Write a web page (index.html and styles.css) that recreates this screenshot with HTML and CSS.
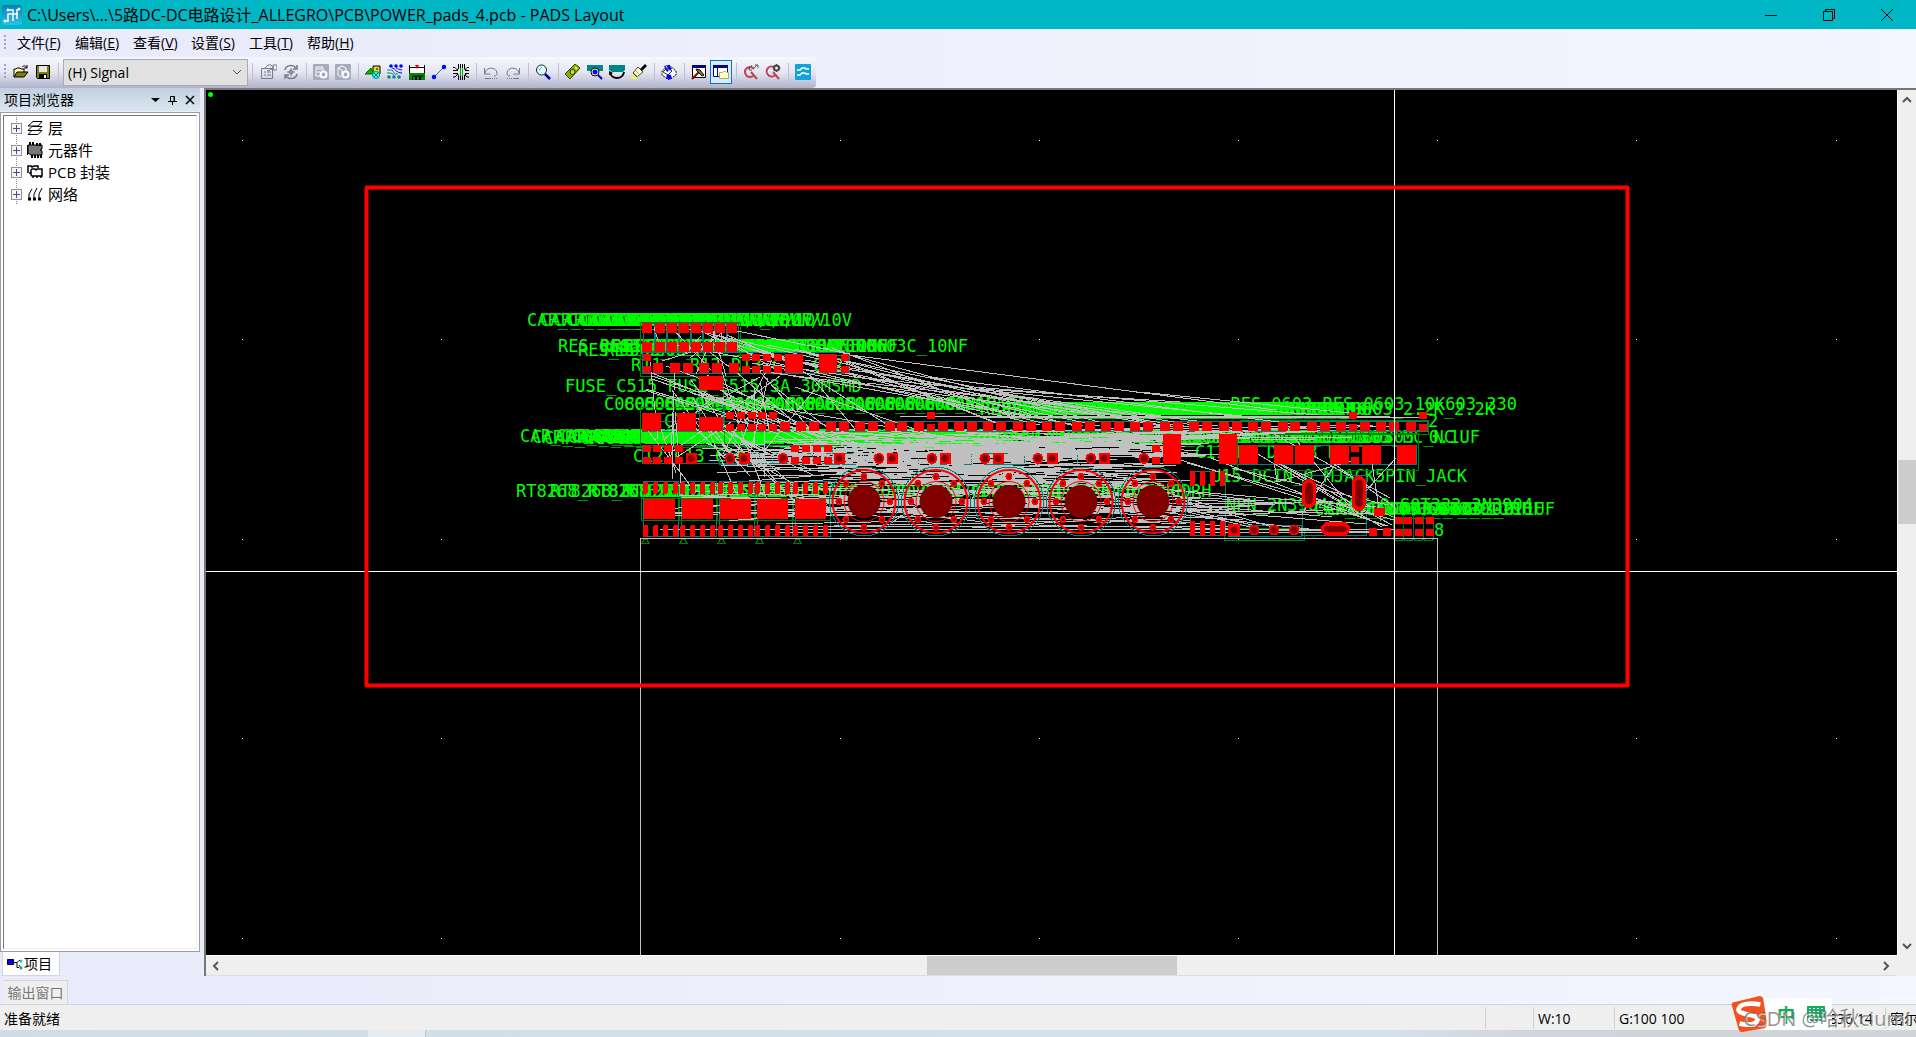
FILE: index.html
```html
<!DOCTYPE html>
<html lang="zh-CN">
<head>
<meta charset="utf-8">
<title>PADS Layout</title>
<link rel="stylesheet" href="styles.css">
</head>
<body>
<div class="app">
  <header class="titlebar">
    <svg class="logo" viewBox="0 0 20 20"><defs><linearGradient id="lg" x1="0" y1="0" x2="0" y2="1"><stop offset="0" stop-color="#0a7fb5"/><stop offset="1" stop-color="#2cc0ee"/></linearGradient></defs><rect width="20" height="20" rx="2" fill="url(#lg)"/><path d="M3 16h3V9h4M6 5h5v11M11 9h5M15 4v10M16 4h2" fill="none" stroke="#fff" stroke-width="1.500"/><circle cx="3" cy="16" r="1.500" fill="#fff"/><circle cx="6" cy="5" r="1.500" fill="#fff"/><circle cx="17" cy="4" r="1.500" fill="#fff"/></svg>
    <h1>C:\Users\...\5路DC-DC电路设计_ALLEGRO\PCB\POWER_pads_4.pcb - PADS Layout</h1>
    <div class="winbtns">
      <button aria-label="最小化"><svg viewBox="0 0 12 12"><path d="M0 6.500h12"/></svg></button>
      <button aria-label="还原"><svg viewBox="0 0 12 12"><path d="M.5 2.500h9v9h-9zM2.500 2.500v-2h9v9h-2"/></svg></button>
      <button aria-label="关闭"><svg viewBox="0 0 12 12"><path d="M0 0l12 12M12 0L0 12"/></svg></button>
    </div>
  </header>

  <nav class="menubar">
    <span class="grip"></span>
    <button>文件(<u>F</u>)</button><button>编辑(<u>E</u>)</button><button>查看(<u>V</u>)</button><button>设置(<u>S</u>)</button><button>工具(<u>T</u>)</button><button>帮助(<u>H</u>)</button>
  </nav>

  <div class="toolbar">
    <span class="grip"></span>
    <button aria-label="打开"><svg viewBox="0 0 16 16"><path d="M1 13V5h2l1-1h3l1 1h3v3" fill="#ff9" stroke="#000"/><path d="M1 13l3-5h11l-4 5z" fill="#808000" stroke="#000"/><path d="M9 3c2-2 4-1 5 1M14 1v3h-3" fill="none" stroke="#000"/></svg></button>
    <button aria-label="保存"><svg viewBox="0 0 16 16"><path d="M1.500 1.500h13v13h-12l-1-1z" fill="#808000" stroke="#000"/><path d="M4 2h8v6H4z" fill="#e6e6e6"/><path d="M4 10h8v4H4z" fill="#000"/><path d="M9 11h2v3H9z" fill="#fff"/></svg></button>
    <span class="sep"></span>
    <select aria-label="层"><option>(H) Signal</option></select>
    <span class="sep wide"></span>
    <button aria-label="特性"><svg viewBox="0 0 16 16" fill="none" stroke="#777b88"><path d="M.5 4.500h11v10H.5zM3 8h2m1 0h4M3 11h2m1 0h4M4 4l3-3h3l2 2v3l-2-1-2 2-2-1M12 1h4v5h-4z"/></svg></button>
    <button aria-label="循环"><svg viewBox="0 0 16 16" fill="none" stroke="#777b88"><path d="M2 6c1-5 8-6 11-2M14 1v4h-4M14 10c-1 5-8 6-11 2M2 15v-4h4" stroke-width="1.500"/><circle cx="8" cy="8" r="2"/><path d="M8 4v8M4 8h8"/></svg></button>
    <span class="sep"></span>
    <button aria-label="设计设置"><svg viewBox="0 0 16 16"><rect width="16" height="16" rx="1" fill="#a5aabd"/><path d="M3 3h7v9H3zM4 5h5M4 8h3" fill="none" stroke="#fff"/><circle cx="10.500" cy="10.500" r="3" fill="#a5aabd" stroke="#fff" stroke-width="2"/></svg></button>
    <button aria-label="库设置"><svg viewBox="0 0 16 16"><rect width="16" height="16" rx="1" fill="#a5aabd"/><path d="M3 4l4-2 4 2v3M3 4v7l3 2M3 4l4 2v5" fill="none" stroke="#fff"/><circle cx="10.500" cy="10.500" r="3" fill="#a5aabd" stroke="#fff" stroke-width="2"/></svg></button>
    <span class="sep"></span>
    <button aria-label="绘图"><svg viewBox="0 0 16 16" stroke="#000"><path d="M8 2h7v8H8z" fill="#dd2"/><path d="M0 10l6-6 3 6z" fill="#0b0" stroke="#060"/><path d="M11 5h2" /><circle cx="11" cy="11" r="3.500" fill="#3ff" stroke="#088"/><path d="M9 9l4 4m0-4l-4 4" stroke="#066"/></svg></button>
    <button aria-label="设计"><svg viewBox="0 0 16 16" fill="none"><g fill="#00f"><circle cx="4" cy="2" r="1.800"/><circle cx="9" cy="2" r="1.800"/><circle cx="14" cy="2" r="1.800"/></g><path d="M5 4c3 0 4 5 10 5M9 4c2 0 3 2 6 2" stroke="#00f"/><path d="M0 6h5l3 4h3M0 9h4l3 2" stroke="#088"/><g fill="#088"><circle cx="2" cy="13" r="1.800"/><circle cx="7" cy="13" r="1.800"/><circle cx="12" cy="13" r="1.800"/></g></svg></button>
    <button aria-label="尺寸"><svg viewBox="0 0 16 16"><path d="M0 2h16v7H0z" fill="#fff"/><path d="M.5 1v8M15.500 1v8M1 3.500h14" stroke="#000" fill="none"/><path d="M6 1l2 4 2-4z" fill="#e00"/><path d="M0 9h16v7H0z" fill="#080"/><path d="M3.500 16v-4h3v4m1 0v-4h3v4m1 0v-4h3" fill="none" stroke="#000"/></svg></button>
    <button aria-label="布线"><svg viewBox="0 0 16 16"><path d="M3 13L13 3" stroke="#088"/><circle cx="3" cy="13" r="2.200" fill="#00f"/><circle cx="13" cy="3" r="2.200" fill="#00f"/></svg></button>
    <button aria-label="ECO"><svg viewBox="0 0 16 16" fill="none" stroke="#000"><path d="M7.500 0v16M9.500 0v16" stroke="#0a0"/><path d="M5.500 0v5l-2 1M11.500 0v5l2 1M5.500 16v-5l-2-1M11.500 16v-5l2-1M0 3.500h2l2 2M0 6.500h5M0 9.500h5M0 13h2l2-2M16 3.500h-2l-2 2M16 6.500h-4M16 9.500h-4M16 13h-2l-2-2M7.500 0v4M9.500 0v4M7.500 12v4M9.500 12v4"/></svg></button>
    <span class="sep"></span>
    <button aria-label="撤销"><svg viewBox="0 0 16 16" fill="none" stroke="#777b88"><path d="M1.500 4v6h6M2 9c1-6 11-7 12 0 0 2-1 3-3 3"/><path d="M2 14.500h6m1 0h1m1 0h1m1 0h1"/></svg></button>
    <button aria-label="重做"><svg viewBox="0 0 16 16" fill="none" stroke="#777b88"><path d="M14.500 4v6h-6M14 9C13 3 3 2 2 9c0 2 1 3 3 3"/><path d="M2 14.500h1m1 0h1m1 0h1m1 0h6"/></svg></button>
    <span class="sep"></span>
    <button aria-label="缩放"><svg viewBox="0 0 16 16"><circle cx="6.500" cy="6" r="5" fill="#dff" stroke="#222"/><path d="M4 6l3-3" stroke="#0cc"/><path d="M10 10l5 5" stroke="#009" stroke-width="2.500"/></svg></button>
    <span class="sep"></span>
    <button aria-label="板"><svg viewBox="0 0 16 16"><path d="M0 10L10 0l5 4L5 15z" fill="#8a1" stroke="#440"/><circle cx="7.500" cy="8" r="2.500" fill="#dd3" stroke="#040"/><path d="M10 3l2 2" stroke="#ff0" stroke-width="2"/></svg></button>
    <button aria-label="查看网络"><svg viewBox="0 0 16 16"><path d="M0 1h16v6H0z" fill="#088"/><circle cx="8" cy="8" r="4" fill="#fff" stroke="#000"/><circle cx="8" cy="8" r="2.500" fill="#00f"/><path d="M11 11l4 4" stroke="#009" stroke-width="2"/></svg></button>
    <button aria-label="重绘"><svg viewBox="0 0 16 16"><path d="M0 1h16v5l-2 2H3L0 6z" fill="#088"/><path d="M1 8c1 8 13 8 14 0" fill="none" stroke="#000" stroke-width="2"/><path d="M0 11V7l4 2z"/></svg></button>
    <button aria-label="格式刷"><svg viewBox="0 0 16 16"><path d="M2 9l5-6 5 5-6 5z" fill="#ffc" stroke="#444"/><path d="M9 5l2 2 5-5-2-2z" fill="#000"/><path d="M5 7l4 4M3 9l4 4" stroke="#aa4"/><path d="M0 14h3l2 1" stroke="#ff0" stroke-width="2" fill="none"/></svg></button>
    <span class="sep"></span>
    <button aria-label="填充"><svg viewBox="0 0 16 16"><path d="M8 1l7 6v4l-7 5-7-5V7z" fill="#fff" stroke="#000" stroke-dasharray="2 1"/><path d="M3 2l5-1 3 4-5 3zM6 10l4 1 1 4H5z" fill="#00f"/><path d="M5 2l4 6" stroke="#fff"/><path d="M2 8l4-4 5 3-4 4z" fill="none" stroke="#333"/></svg></button>
    <span class="sep"></span>
    <button aria-label="输出"><svg viewBox="0 0 16 16"><path d="M1.500 2.500h13v11h-13z" fill="#fff" stroke="#000"/><path d="M1 1h14v3H1z" fill="#008"/><path d="M1 15l7-7" stroke="#800" stroke-width="2"/><path d="M5 5l4 1 4 5-2 1-5-5z" fill="#880" stroke="#000"/></svg></button>
    <button class="active" aria-label="项目浏览器"><svg viewBox="0 0 16 16"><path d="M.5 1.500h14v11H.5z" fill="#fff" stroke="#008"/><path d="M0 1h15v3H0z" fill="#008"/><path d="M4.500 3v10" stroke="#008"/><path d="M6.500 14.500v-6h3l1-1h2l1 1h2v6z" fill="#ffc" stroke="#aa6"/></svg></button>
    <span class="sep"></span>
    <button aria-label="发送"><svg viewBox="0 0 16 16" fill="none"><path d="M11 5a5 5 0 1 0 0 6M8 8l6 7" stroke="#c2434e" stroke-width="2"/><path d="M6 5l3-4M10 5l4-4M12 1h3v3M6 3v3h3" stroke="#555"/></svg></button>
    <button aria-label="查询设置"><svg viewBox="0 0 16 16" fill="none"><path d="M9 3a5 5 0 1 0 2 7M8 8l6 7" stroke="#c2434e" stroke-width="2"/><circle cx="11.500" cy="4" r="2.500" stroke="#444" stroke-width="2"/><path d="M11.500 0v8M7.500 4h8" stroke="#444" stroke-dasharray="1 6"/></svg></button>
    <span class="sep"></span>
    <button aria-label="Router"><svg viewBox="0 0 16 16"><rect width="16" height="16" rx="1" fill="#12a3d8"/><path d="M2 6h3l2-2h3l1 1h3M2 11h3l2-2h3l1 1h3" fill="none" stroke="#fff" stroke-width="1.500"/></svg></button>
  </div>

  <main class="work">
    <aside class="panel">
      <div class="panelhead"><h2>项目浏览器</h2>
        <button aria-label="菜单"><svg viewBox="0 0 10 10"><path d="M0 3h9L4.500 7z"/></svg></button>
        <button aria-label="固定"><svg viewBox="0 0 10 10"><path d="M2.500 6V1.500h4V6M0 6.500h9M4.500 7v3M6 1v5" fill="none" stroke="#000"/></svg></button>
        <button aria-label="关闭面板"><svg viewBox="0 0 10 10"><path d="M1 1l8 8M9 1L1 9" stroke="#000" stroke-width="1.500"/></svg></button>
      </div>
      <div class="treebox">
        <ul class="tree">
          <li><button class="plus" aria-label="展开"></button><svg viewBox="0 0 16 16" fill="#fff" stroke="#000"><path d="M1 14.500l4-4h10l-4 4zM1 10.500l4-4h10l-4 4zM1 6l5-4.500h9L11 6z"/></svg>层</li>
          <li><button class="plus" aria-label="展开"></button><svg viewBox="0 0 16 16"><path d="M1 3h14v4l-2 1 2 1v4H4L1 11z" fill="#777" stroke="#000"/><path d="M3 0v3m3-3v3m4-2v3m3-3v3M5 13v3m3-3v3m3-3v3m3-3v3M0 3v10" stroke="#000" stroke-width="2"/></svg>元器件</li>
          <li><button class="plus" aria-label="展开"></button><svg viewBox="0 0 16 16" fill="#fff" stroke="#000" stroke-width="1.500"><path d="M1 9V2h3l1 1 2-1h4v2"/><path d="M5 5h3l1 1 1-1h5v7H5l-1-1V6z"/><path d="M6 12v2m4-2v2m4-2v2M2 9h2"/></svg>PCB 封装</li>
          <li><button class="plus" aria-label="展开"></button><svg viewBox="0 0 16 16" fill="none" stroke="#000"><path d="M2 13V8l3-5M7 13V8l3-6M12 13V8l3-6" /><path d="M1 13h3M6 13h3M11 13h3" stroke-width="3"/></svg>网络</li>
        </ul>
      </div>
      <button class="tab"><svg viewBox="0 0 16 12"><path d="M.5 1.500h6v5h-6z" fill="#00f" stroke="#000"/><path d="M7 4.500h3v5h2M10 4.500l2-2h2M14 10l-2-3" fill="none" stroke="#000"/><circle cx="14" cy="3" r="1.500" fill="#0cc"/><circle cx="14" cy="10" r="1.500" fill="#0a8"/></svg>项目</button>
    </aside>

    <section class="view">
      <svg id="board" class="board" viewBox="206 90 1691 865" preserveAspectRatio="xMinYMin slice"></svg>
      <div class="vscroll"><button aria-label="上"><svg viewBox="0 0 10 8"><path d="M1 6l4-4 4 4"/></svg></button><i></i><b></b><i></i><button aria-label="下"><svg viewBox="0 0 10 8"><path d="M1 2l4 4 4-4"/></svg></button></div>
      <div class="hscroll"><button aria-label="左"><svg viewBox="0 0 8 10"><path d="M6 1L2 5l4 4"/></svg></button><i></i><b></b><i></i><button aria-label="右"><svg viewBox="0 0 8 10"><path d="M2 1l4 4-4 4"/></svg></button></div>
    </section>
  </main>

  <div class="outrow"><button>输出窗口</button></div>
  <footer class="status">
    <span class="ready">准备就绪</span><span class="c1"></span><span class="c2">W:10</span><span class="c3">G:100 100</span><span class="c4">836.14</span><span class="c5">密尔</span>
  </footer>
  <div class="desk"><i></i></div>

  <div class="ime"><svg class="sogou" viewBox="0 0 40 40"><path d="M3 8L31 1q3 0 4 3l4 26q0 4-3 5L13 39q-3 0-4-3L2 11q-1-2 1-3z" fill="#f4511e"/><path d="M32 10C22 8 10 9 9 15s21 5 20 11-12 6-19 4" fill="none" stroke="#fff" stroke-width="5"/></svg><span>中</span><svg class="keys" viewBox="0 0 18 16"><path d="M1 1h16v10H1zM1 4h16M1 7h16M5 1v10M9 1v10M13 1v10M3 14h12" fill="none" stroke="#12b05a" stroke-width="2"/></svg></div>
  <div class="watermark">CSDN @哈秋ciumi</div>
</div>
<script src="board.js"></script>
</body>
</html>
```
FILE: styles.css
```css
* { box-sizing: border-box; }
body { margin: 0; font-family: "Open Sans", "Noto Sans CJK SC", sans-serif; font-size: 14px; color: #000; }
button { border: 0; padding: 0; margin: 0; background: none; font: inherit; color: inherit; }
h1, h2 { margin: 0; font-weight: 400; }
svg { display: block; flex: none; }
.app { position: relative; height: 100vh; display: flex; flex-direction: column; overflow: hidden; background: linear-gradient(90deg, #e9eafa, #f3f6ff); }

.titlebar { flex: none; height: 29px; display: flex; align-items: center; background: #00b7c5; }
.logo { width: 20px; height: 20px; margin: 0 5px 0 2px; }
.titlebar h1 { flex: 1; font-size: 16px; line-height: 28px; white-space: nowrap; }
.winbtns { display: flex; }
.winbtns button { width: 58px; height: 28px; display: grid; place-items: center; }
.winbtns svg { width: 12px; height: 12px; fill: none; stroke: #000; }

.menubar { flex: none; height: 28px; display: flex; align-items: center; gap: 14px; }
.menubar button { width: 44px; text-align: left; white-space: nowrap; line-height: 20px; }
.grip { flex: none; width: 2px; height: 16px; margin-left: 4px; background: repeating-linear-gradient(#a5a7b8 0 2px, transparent 2px 4px); }
.menubar .grip { margin-right: -3px; }

.toolbar { flex: none; align-self: flex-start; height: 31px; padding: 0 2px 2px 0; display: flex; align-items: center; background: linear-gradient(#f6f7fd, #e4e5f1 50%, #b2b2cb); border-radius: 0 4px 4px 0; }
.toolbar .grip { margin-right: 4px; }
.toolbar button { width: 22px; height: 24px; display: grid; place-items: center; }
.toolbar button svg { width: 16px; height: 16px; }
.toolbar .active { background: #dde9fa; border: 1px solid #0078d7; }
.sep { width: 8px; height: 18px; background: linear-gradient(#bfc0cf, #bfc0cf) 4px 0 / 1px 100% no-repeat; }
.sep.wide { width: 10px; }
.toolbar select { width: 185px; height: 27px; margin: 2px 0 0 1px; padding: 0 24px 0 4px; appearance: none; border: 1px solid #acacac; border-radius: 0; font: inherit; color: #000; background: #e1e1e1 url("data:image/svg+xml,%3Csvg xmlns='http://www.w3.org/2000/svg' width='10' height='6'%3E%3Cpath d='M1 0l4 4 4-4' fill='none' stroke='%23555'/%3E%3C/svg%3E") right 5px center no-repeat; }

.work { flex: 1; min-height: 0; display: flex; }
.panel { flex: none; width: 200px; margin-right: 4px; display: flex; flex-direction: column; }
.panelhead { height: 23px; flex: none; padding: 0 2px 0 4px; display: flex; align-items: center; background: linear-gradient(#c0cfdf, #dbe6f1); }
.panelhead h2 { flex: 1; font-size: 14px; line-height: 20px; }
.panelhead button { width: 17px; display: grid; place-items: center; }
.panelhead svg { width: 10px; height: 10px; }
.treebox { flex: 1; margin-top: 1px; border: 1px solid #9a9ca6; padding: 2px; background: #fff; }
.tree { height: 100%; margin: 0; padding: 1px 0 0 7px; list-style: none; border-top: 1px solid #777; border-left: 1px solid #777; border-right: 1px solid #eee; border-bottom: 1px solid #eee; font-size: 15px; }
.tree li { height: 22px; display: flex; align-items: center; gap: 5px; line-height: 22px; white-space: nowrap; background: repeating-linear-gradient(#888 0 1px, transparent 1px 2px) 5px 0 / 1px 100% no-repeat; }
.tree li svg { width: 16px; height: 16px; }
.plus { width: 11px; height: 11px; border: 1px solid #919191; background: linear-gradient(#3a4f96, #3a4f96) center / 7px 1px no-repeat, linear-gradient(#3a4f96, #3a4f96) center / 1px 7px no-repeat, #f6f6f6; }
.tab { flex: none; width: 58px; height: 24px; margin: 0 0 0 2px; padding-left: 4px; display: flex; align-items: center; gap: 1px; background: #fff; border: solid #d4d4dc; border-width: 0 1px 1px; line-height: 20px; }
.tab svg { width: 16px; height: 12px; }

.view { flex: 1; min-width: 0; display: grid; grid-template: minmax(0, 1fr) 21px / minmax(0, 1fr) 19px; border: solid #777; border-width: 2px 0 0 2px; background: #efefef; }
.board { width: 100%; height: 100%; background: #000; }
.vscroll { display: grid; grid-template-rows: 20px 350fr 64fr 412fr 19px; border-left: 1px solid #fff; }
.hscroll { display: grid; grid-template-columns: 19px 702fr 250fr 697fr 23px; border-top: 1px solid #fff; border-bottom: 1px solid #ddd; }
.view b { background: #cdcdcd; }
.view button { display: grid; place-items: center; }
.view button svg { width: 10px; height: 10px; fill: none; stroke: #555; stroke-width: 2px; }

.outrow { flex: none; height: 29px; padding: 4px 0 0 4px; border-bottom: 1px solid #d3d3df; }
.outrow button { width: 64px; height: 24px; background: #efefef; border: 1px solid #d4d4dc; border-width: 1px 1px 0 0; color: #777; line-height: 22px; }
.status { flex: none; height: 25px; display: flex; align-items: center; background: #efefef; white-space: nowrap; }
.status span { height: 22px; line-height: 23px; padding-left: 4px; border-left: 1px solid #d2d2d2; }
.status .ready { flex: 1; border: 0; }
.c1 { width: 48px; } .c2 { width: 81px; } .c3 { width: 211px; }
.status .c4 { width: 60px; border: 0; }
.status .c5 { width: 31px; overflow: hidden; }
.desk { flex: none; height: 7px; background: linear-gradient(90deg, #d0dde6, #d3e2ed 72%, #d2d4dd 80%, #d0d3d8); }
.desk i { display: block; width: 58px; height: 7px; margin-left: 368px; background: #e8edf3; border-right: 1px solid #b9c4cf; }

.ime { position: absolute; right: 84px; bottom: 7px; height: 32px; width: 102px; display: flex; align-items: center; gap: 12px; padding-right: 5px; background: linear-gradient(#fff, #fff) right / 70px 100% no-repeat; color: #12b05a; font-size: 18px; font-weight: 700; }
.ime .sogou { width: 38px; height: 38px; margin: 0 -3px 0 0; }
.ime .keys { width: 18px; height: 16px; }
.watermark { position: absolute; right: 6px; bottom: 6px; font-size: 20px; line-height: 24px; color: rgba(110, 110, 110, .75); text-shadow: 1px 1px 0 rgba(255, 255, 255, .7); white-space: nowrap; }

.silk { font: 17px "DejaVu Sans Mono", monospace; fill: #0f0; }
.pad { fill: #f00; shape-rendering: crispEdges; }
.hole { fill: #800000; }
.ring { fill: none; stroke: #f00; }
.teal { fill: none; stroke: #008080; shape-rendering: crispEdges; }
.court { fill: none; stroke: #008000; shape-rendering: crispEdges; }
.net { fill: none; stroke: #c0c0c0; shape-rendering: crispEdges; }
.white { fill: none; stroke: #fff; shape-rendering: crispEdges; }
.mark { fill: none; stroke: #f00; stroke-width: 4px; stroke-linejoin: round; }
```
FILE: board.js
```js
const out = [];
const rect = (cls, x, y, w, h, r = 0) => out.push(`<rect class="${cls}" x="${x}" y="${y}" width="${w}" height="${h}" rx="${r}"/>`);
const circle = (cls, x, y, r, sw = 1) => out.push(`<circle class="${cls}" cx="${x}" cy="${y}" r="${r}" stroke-width="${sw}"/>`);
const text = (x, y, s, anchor = "start") => out.push(`<text class="silk" x="${x}" y="${y}" text-anchor="${anchor}">${s}</text>`);
const pads = (xs, y, w, h, r) => xs.forEach(x => rect("pad", x, y, w, h, r));
const path = (cls, d) => out.push(`<path class="${cls}" d="${d}"/>`);

// repeatable pseudo-random numbers for the ratsnest
let seed = 7;
const rnd = (a, b) => {
  seed = (seed * 1103515245 + 12345) % 2147483648;
  return Math.round(a + (b - a) * seed / 2147483648);
};

// grid dots
for (let i = 0; i < 9; i++)
  for (let j = 0; j < 5; j++) rect("dot", Math.round(242 + i * 199.2), Math.round(140 + j * 199.4), 1, 1);

// ratsnest, drawn in layers between the labels
let d = "";
const fan = (n, x1, x2, y1, y2, X1, X2, Y1, Y2) => {
  for (let i = 0; i < n; i++) d += `M${rnd(x1, x2)} ${rnd(y1, y2)}L${rnd(X1, X2)} ${rnd(Y1, Y2)}`;
};
const flush = () => { path("net", d); d = ""; };
fan(50, 740, 980, 428, 466, 980, 1230, 430, 460);
fan(30, 700, 900, 440, 485, 1000, 1190, 450, 490);
flush();

// silkscreen labels
for (let i = 0; i < 9; i++) text(527 + i * 13, 326, "CAP_C0603_0.1UF/10V");
text(852, 326, "_10UF/10V", "end");
[558, 600, 612, 624, 636].forEach(x => text(x, 352, "RES_0603_10K_R0603"));
[578, 604].forEach(x => text(x, 356, "RES_0603_R"));
[968, 898, 888, 876, 860, 848].forEach(x => text(x, 352, "CAP_C0603C_10NF", "end"));
text(631, 371, "R11");
text(690, 371, "R12 R13   C11   C12");
text(565, 392, "FUSE_C515_FUSE_C515_3A_30MSMD");
for (let i = 0; i < 18; i++) text(604 + i * 20, 410, "C0805_CAP");
for (let i = 0; i < 26; i++) text(980 + i * 11, 415, "RES_0603_10K");
text(1517, 410, "RES_0603_RES_0603_10K603_330", "end");
text(1495, 415, "RES_0603_2.2K_2.2K", "end");
text(1428, 427, "2");
for (let i = 0; i < 32; i++) text(520 + i * 12, 442 + i % 3, "CAP_C0805_10UF");
for (let i = 0; i < 14; i++) text(1010 + i * 24, 443, "CAP_C0805");
text(1454, 443, "LED_LED0805_MC_NC", "end");
text(1480, 443, "0.1UF", "end");
text(633, 462, "C12 C13 C14");
[516, 550, 588, 626, 664].forEach(x => text(x, 497, "RT8268_RT8268_SSOP8"));
for (let i = 0; i < 13; i++) text(850 + i * 25, 497, "L_CDRH");
text(1467, 482, "U15_DCIN_0_MJACK5PIN_JACK", "end");
text(1533, 511, "NPN_2N3904_SOT_Q_S0T323_2N3904", "end");
[1555, 1543, 1531, 1519].forEach(x => text(x, 515, "CAP_C0603_0603_0.1UF", "end"));
text(1434, 536, "8");
text(664, 427, "C15");
text(1195, 458, "C11  D1   D2 Q3  D4");

// outlines of parts
for (let i = 0; i < 8; i++) rect("teal", 643.5 + i * 12, 323.5, 11, 28);
rect("court", 640.5, 322.5, 100, 54);
rect("teal", 642.5, 352.5, 207, 21);
rect("court", 640.5, 407.5, 84, 40);
rect("teal", 699.5, 376.5, 24, 54);
rect("teal", 642.5, 421.5, 785, 10);
rect("court", 1240.5, 420.5, 188, 14);
rect("teal", 642.5, 445.5, 190, 18);
for (let i = 0; i < 7; i++) rect("teal", 878.5 + (i - 3) * 53, 453.5, 40, 11);
for (let i = 0; i < 5; i++) { rect("teal", 643.5 + i * 38, 481.5, 35, 55); rect("court", 641.5 + i * 38, 498.5, 37, 22); path("court", `M${642 + i * 38} 543.500l2-4h3l2 4z`); }
rect("teal", 1190.5, 471.5, 35, 64);
rect("teal", 1230.5, 445.5, 186, 19);
rect("court", 1237.5, 433.5, 181, 37);
rect("teal", 1302.5, 475.5, 64, 60);
rect("teal", 1228.5, 525.5, 73, 11);
rect("court", 1224.5, 528.5, 80, 12);
for (let i = 0; i < 4; i++) rect("court", 1393.5 + i * 10, 514.5, 10, 26, 3);

d = "M842 354L1276 410M732 330L850 354M980 389L1180 402M1140 392L1350 413";
fan(16, 735, 845, 345, 372, 960, 1200, 414, 428);
fan(6, 840, 980, 376, 392, 1100, 1420, 414, 426);
fan(16, 645, 730, 325, 345, 660, 840, 350, 376);
fan(34, 645, 830, 360, 400, 650, 960, 420, 470);
fan(20, 645, 800, 410, 450, 650, 860, 455, 510);
fan(46, 740, 980, 428, 466, 980, 1230, 430, 458);
fan(18, 1000, 1180, 430, 444, 1180, 1400, 422, 440);
fan(20, 700, 900, 450, 485, 1000, 1190, 460, 490);
fan(46, 650, 980, 480, 528, 880, 1200, 480, 524);
fan(26, 900, 1200, 480, 525, 1180, 1390, 495, 532);
fan(10, 1220, 1400, 430, 470, 1250, 1400, 480, 525);
fan(6, 1170, 1300, 440, 470, 1380, 1400, 510, 530);
d += "M660 529.500H1400M780 532.500H1370M830 526.500H1200M900 416.500H1390M980 417.500H1420";
flush();

// surface-mount pads
pads([642, 655, 667, 679, 691, 703, 715, 727], 323, 10, 10);
pads([642, 655, 667, 679, 691, 703, 715, 727], 342, 10, 10);
pads([643, 742, 752, 763, 774, 841], 354, 8, 7);
pads([643, 742, 752, 763, 774, 841], 366, 8, 7);
pads([653, 670, 683, 699, 712, 729], 363, 10, 10);
pads([785, 819], 354, 18, 19);
pads([699], 376, 24, 14);
pads([699], 417, 24, 14);
pads([642, 677], 413, 19, 18);
pads([726, 737, 748, 758, 769, 927, 1349, 1419], 412, 8, 7);
pads([726, 737, 748, 758, 769, 927, 1349, 1419], 424, 8, 7);
pads([780, 796, 809, 826, 839, 855, 868, 885, 897, 914, 938, 954, 967, 983, 996, 1013, 1026, 1042, 1055, 1072, 1085, 1101, 1114, 1130, 1143, 1160, 1173, 1189, 1202, 1219, 1232, 1248, 1261, 1278, 1290, 1307, 1320, 1336, 1360, 1376, 1389, 1406], 422, 10, 9);
pads([643, 653, 664, 675, 791, 802, 813, 824, 1152, 1351], 445, 8, 7);
pads([643, 653, 664, 675, 791, 802, 813, 824, 1152, 1351], 457, 8, 7);
pads([1163, 1219], 434, 18, 30);
pads([1239, 1274, 1295, 1330, 1362, 1397], 445, 19, 19);
const pins = [643, 653, 663, 673, 680, 690, 700, 710, 718, 728, 738, 748, 755, 765, 775, 785, 793, 803, 813, 823];
pads(pins, 482, 5, 12, 2);
pads(pins, 525, 5, 12, 2);
pads([644, 682, 720, 757, 795], 499, 31, 20);
pads([1190, 1200, 1210, 1220], 471, 5, 15);
pads([1190, 1200, 1210, 1220], 521, 5, 15);
pads([1374], 508, 11, 8);
pads([1369, 1383], 528, 8, 8);
pads([1395, 1404, 1415, 1426], 517, 8, 7);
pads([1395, 1404, 1415, 1426], 529, 8, 7);

// through-hole pads
[691, 744, 839, 892, 945, 998, 1052, 1104].forEach(x => { rect("pad", x - 5, 453, 11, 11); circle("hole", x, 458.5, 3.5); });
[730, 783, 879, 932, 985, 1038, 1091, 1144].forEach(x => { circle("pad", x, 458.5, 5.5); circle("hole", x, 458.5, 3.5); });
rect("pad", 1228, 524, 12, 12);
circle("hole", 1234, 530, 3.5);
[1254, 1274, 1294].forEach(x => { circle("pad", x, 530, 5.5); circle("hole", x, 530, 3.5); });
[[1302, 479, 14, 29], [1352, 476, 14, 35], [1321, 522, 29, 14]].forEach(([x, y, w, h]) => {
  rect("pad", x, y, w, h, 7);
  rect("hole", x + 3, y + 4, w - 6, h - 8, 4);
});

// inductors
[864, 936, 1009, 1081, 1153].forEach(x => {
  circle("teal", x, 501.5, 34.5);
  circle("ring", x, 501.5, 31.5, 2);
  circle("ring", x, 501.5, 20);
  circle("hole", x, 501.5, 16.5);
  for (let k = 0; k < 8; k++) {
    const cx = x + Math.round(25.5 * Math.cos(k * Math.PI / 4));
    const cy = 501.5 + Math.round(25.5 * Math.sin(k * Math.PI / 4));
    circle("pad", cx, cy, 3.5);
    circle("hole", cx, cy, 1.5);
  }
});

// board outline, cursor and highlighted area
path("net", "M640.500 955V538.500H1437.500V955");
path("white", "M1394.500 90V955M206 571.500H1897");
circle("origin", 210.5, 94.5, 2.5);
out.push('<rect class="mark" x="366.500" y="187.500" width="1261" height="498"/>');

document.getElementById("board").innerHTML = out.join("").replace(/class="dot"/g, 'fill="#fff"').replace(/class="origin"/g, 'fill="#0f0"');
```
